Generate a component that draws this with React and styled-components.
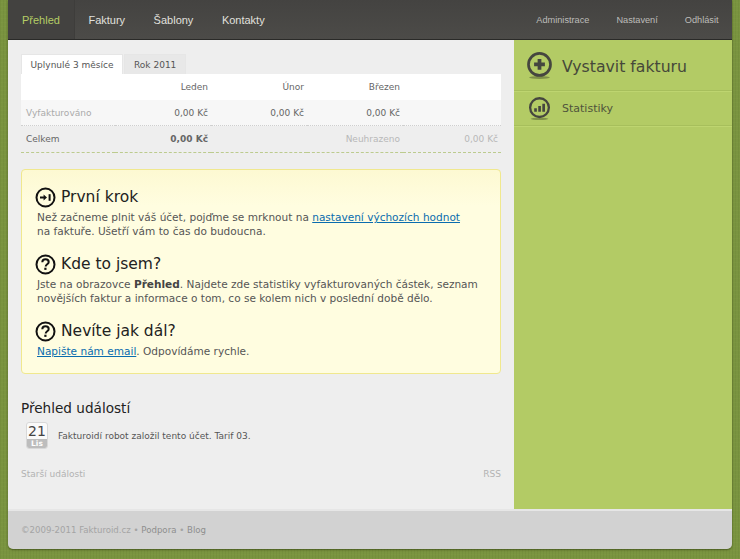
import React from "react";
import styled, { createGlobalStyle } from "styled-components";

const GlobalStyle = createGlobalStyle`
  html, body {
    margin: 0;
    padding: 0;
    height: 100%;
    background-color: #7a9440;
    background-image:
      repeating-linear-gradient(90deg, rgba(60, 80, 20, 0.08) 0 1px, transparent 1px 3px),
      repeating-linear-gradient(0deg, rgba(150, 175, 80, 0.08) 0 1px, transparent 1px 4px);
    font-family: "DejaVu Sans", Verdana, sans-serif;
    overflow: hidden;
  }
`;

const Page = styled.div`
  width: 724px;
  height: 549px;
  margin: 0 8px;
  display: flex;
  flex-direction: column;
  border-radius: 0 0 5px 5px;
  overflow: hidden;
  box-shadow: 0 1px 2px rgba(40, 50, 10, 0.6);
`;

const Nav = styled.nav`
  height: 39px;
  flex: none;
  display: flex;
  justify-content: space-between;
  background: linear-gradient(#444341, #4c4b48);
  border-bottom: 1px solid #2a2a28;
  font-family: "Liberation Sans", Arial, sans-serif;
`;

const NavGroup = styled.div`
  display: flex;
  align-items: stretch;
`;

const NavItem = styled.a`
  display: flex;
  align-items: center;
  padding: 0 14.5px 0 14px;
  font-size: 11px;
  color: ${(props) => (props.$active ? "#b5cd66" : "#e0e0de")};
  background: ${(props) => (props.$active ? "#434240" : "transparent")};
  box-shadow: ${(props) => (props.$active ? "1px 0 0 #3e3d3b" : "none")};
`;

const SubNavItem = styled.a`
  display: flex;
  align-items: center;
  padding: 0 13.5px;
  font-size: 9.2px;
  color: #bdbdba;
`;

const Body = styled.div`
  flex: 1;
  display: flex;
  min-height: 0;
`;

const Main = styled.main`
  width: 506px;
  flex: none;
  box-sizing: border-box;
  padding: 14px 13px 0;
  background: #eeeeee;
`;

const Side = styled.aside`
  flex: 1;
  background: #b3cb65;
`;

const SideRow = styled.div`
  display: flex;
  align-items: center;
  height: ${(props) => (props.$big ? "50px" : "34px")};
  padding-left: ${(props) => (props.$big ? "12px" : "14px")};
  gap: ${(props) => (props.$big ? "9px" : "11px")};
  border-bottom: 1px solid #a7bf5c;
  box-shadow: 0 1px 0 #bed570;
  font-size: ${(props) => (props.$big ? "15.7px" : "11px")};
  color: ${(props) => (props.$big ? "#46483a" : "#50543c")};
`;

const SideLabel = styled.span`
  position: relative;
  top: ${(props) => (props.$big ? "1px" : "0")};
`;

const Tabs = styled.div`
  display: flex;
  height: 20px;
`;

const Tab = styled.div`
  display: flex;
  align-items: center;
  padding: 0 ${(props) => (props.$active ? "8.5px" : "9px")};
  font-size: 9px;
  color: #555;
  background: ${(props) => (props.$active ? "#ffffff" : "#e8e8e8")};
  border: 1px solid #e6e6e6;
  border-bottom: none;
  margin-right: 1px;
`;

const Table = styled.div`
  display: grid;
  grid-template-columns: 94px 96px 96px 96px 1fr;
  font-size: 9px;
`;

const Cell = styled.div`
  height: ${(props) => (props.$h || 25) + "px"};
  display: flex;
  align-items: center;
  justify-content: ${(props) => (props.$left ? "flex-start" : "flex-end")};
  padding: 0 3px 0 ${(props) => (props.$left ? "5px" : "0")};
  box-sizing: border-box;
  white-space: nowrap;
  color: ${(props) => props.$color || "#666"};
  font-weight: ${(props) => (props.$bold ? "bold" : "normal")};
  background: ${(props) => props.$bg || "transparent"};
  border-bottom: ${(props) => props.$line || "none"};
`;

const HelpBox = styled.section`
  margin-top: 16px;
  height: 205px;
  box-sizing: border-box;
  padding: 16px 13px 0;
  background: linear-gradient(#fdf9d2, #fffde0 36px);
  border: 1px solid #f0e88e;
  border-radius: 4px;
`;

const Step = styled.div`
  margin-bottom: 15px;
`;

const StepTitle = styled.h3`
  display: flex;
  align-items: center;
  gap: 5px;
  margin: 0 0 2px;
  height: 22px;
  font-size: 15.5px;
  font-weight: normal;
  color: #222;
`;

const StepText = styled.p`
  margin: 0 0 0 2px;
  font-size: 10.55px;
  line-height: 14px;
  color: #555;
  white-space: nowrap;

  a {
    color: #0a6cae;
    text-decoration: underline;
  }

  strong {
    color: #444;
  }
`;

const EventsTitle = styled.h2`
  margin: 25px 0 5px;
  font-size: 13.6px;
  line-height: 18px;
  font-weight: normal;
  color: #222;
`;

const Event = styled.div`
  display: flex;
  align-items: center;
  gap: 10px;
  padding-left: 5px;
  font-size: 9px;
  color: #555;
`;

const DateBadge = styled.div`
  width: 22px;
  height: 27px;
  display: flex;
  flex-direction: column;
  border-radius: 3px;
  overflow: hidden;
  border: 1px solid #d8d8d8;
  box-sizing: border-box;
  background: #fafafa;
`;

const DateDay = styled.div`
  flex: 1;
  text-align: center;
  font-size: 14px;
  line-height: 16px;
  color: #444;
`;

const DateMonth = styled.div`
  height: 10px;
  background: #bdbdbd;
  color: #fff;
  text-align: center;
  font-size: 7.5px;
  line-height: 10px;
  font-weight: bold;
`;

const MoreRow = styled.div`
  display: flex;
  justify-content: space-between;
  margin-top: 20px;
  font-size: 9px;
  color: #b2b2b2;
`;

const Footer = styled.footer`
  height: 40px;
  flex: none;
  display: flex;
  align-items: center;
  box-sizing: border-box;
  padding-left: 13px;
  background: #d2d2d2;
  border-top: 2px solid #e6e6e6;
  font-size: 8.6px;
  color: #a4a4a4;

  span {
    color: #8e8e8e;
  }
`;

function CircleIcon({ size, children }) {
  return (
    <svg width={size} height={size} viewBox="0 0 26 26" style={{ flex: "none" }}>
      <ellipse cx="13" cy="24.6" rx="10" ry="1.4" fill="#7f9148" />
      <circle cx="13" cy="12" r="10.6" fill="none" stroke="#45463f" strokeWidth="2.6" />
      {children}
    </svg>
  );
}

function HelpIcon() {
  return (
    <svg width="21" height="21" viewBox="0 0 21 21" style={{ flex: "none" }}>
      <circle cx="10.5" cy="10.5" r="9" fill="none" stroke="#111" strokeWidth="2" />
      <path
        d="M7.3 8.2c0-2 1.4-3 3.2-3s3.2 1 3.2 2.7c0 2.4-3 2.3-3 4.6"
        fill="none"
        stroke="#111"
        strokeWidth="2"
      />
      <rect x="9.3" y="13.7" width="2.2" height="2.2" fill="#111" />
    </svg>
  );
}

function StartIcon() {
  return (
    <svg width="21" height="21" viewBox="0 0 21 21" style={{ flex: "none" }}>
      <circle cx="10.5" cy="10.5" r="9" fill="none" stroke="#111" strokeWidth="2" />
      <path d="M5 9.6h3.6V7.4l3.4 3.1-3.4 3.1v-2.2H5z" fill="#111" />
      <rect x="13.6" y="7.2" width="2" height="6.6" fill="#111" />
    </svg>
  );
}

export default function App() {
  return (
    <>
      <GlobalStyle />
      <Page>
        <Nav>
          <NavGroup>
            <NavItem $active>Přehled</NavItem>
            <NavItem>Faktury</NavItem>
            <NavItem>Šablony</NavItem>
            <NavItem>Kontakty</NavItem>
          </NavGroup>
          <NavGroup>
            <SubNavItem>Administrace</SubNavItem>
            <SubNavItem>Nastavení</SubNavItem>
            <SubNavItem>Odhlásit</SubNavItem>
          </NavGroup>
        </Nav>
        <Body>
          <Main>
            <Tabs>
              <Tab $active>Uplynulé 3 měsíce</Tab>
              <Tab>Rok 2011</Tab>
            </Tabs>
            <Table>
              <Cell $h={26} $bg="#fff" />
              <Cell $h={26} $bg="#fff">Leden</Cell>
              <Cell $h={26} $bg="#fff">Únor</Cell>
              <Cell $h={26} $bg="#fff">Březen</Cell>
              <Cell $h={26} $bg="#fff" />

              <Cell $left $bg="#f7f7f7" $color="#aaa" $h={26} $line="1px dotted #cfcfcf">Vyfakturováno</Cell>
              <Cell $bg="#f7f7f7" $h={26} $line="1px dotted #cfcfcf">0,00 Kč</Cell>
              <Cell $bg="#f7f7f7" $h={26} $line="1px dotted #cfcfcf">0,00 Kč</Cell>
              <Cell $bg="#f7f7f7" $h={26} $line="1px dotted #cfcfcf">0,00 Kč</Cell>
              <Cell $bg="#f7f7f7" $h={26} $line="1px dotted #cfcfcf" />

              <Cell $left $h={27} $line="1px dashed #bccb8e">Celkem</Cell>
              <Cell $bold $h={27} $line="1px dashed #bccb8e">0,00 Kč</Cell>
              <Cell $h={27} $line="1px dashed #bccb8e" />
              <Cell $color="#b8b8b8" $h={27} $line="1px dashed #bccb8e">Neuhrazeno</Cell>
              <Cell $color="#b8b8b8" $h={27} $line="1px dashed #bccb8e">0,00 Kč</Cell>
            </Table>

            <HelpBox>
              <Step>
                <StepTitle><StartIcon />První krok</StepTitle>
                <StepText>
                  Než začneme plnit váš účet, pojďme se mrknout na{" "}
                  <a href="#nastaveni">nastavení výchozích hodnot</a>
                  <br />
                  na faktuře. Ušetří vám to čas do budoucna.
                </StepText>
              </Step>
              <Step>
                <StepTitle><HelpIcon />Kde to jsem?</StepTitle>
                <StepText>
                  Jste na obrazovce <strong>Přehled</strong>. Najdete zde statistiky vyfakturovaných částek, seznam
                  <br />
                  novějších faktur a informace o tom, co se kolem nich v poslední době dělo.
                </StepText>
              </Step>
              <Step>
                <StepTitle><HelpIcon />Nevíte jak dál?</StepTitle>
                <StepText>
                  <a href="#email">Napište nám email</a>. Odpovídáme rychle.
                </StepText>
              </Step>
            </HelpBox>

            <EventsTitle>Přehled událostí</EventsTitle>
            <Event>
              <DateBadge>
                <DateDay>21</DateDay>
                <DateMonth>Lis</DateMonth>
              </DateBadge>
              Fakturoidí robot založil tento účet. Tarif 03.
            </Event>
            <MoreRow>
              <span>Starší události</span>
              <span>RSS</span>
            </MoreRow>
          </Main>
          <Side>
            <SideRow $big>
              <CircleIcon size={27}>
                <path d="M11.2 6.8h3.6v3.4h3.4v3.6h-3.4v3.4h-3.6v-3.4H7.8v-3.6h3.4z" fill="#45463f" />
              </CircleIcon>
              <SideLabel $big>Vystavit fakturu</SideLabel>
            </SideRow>
            <SideRow>
              <CircleIcon size={23}>
                <path d="M7 12.6h3v4.2H7zM11.6 10.2h3v6.6h-3zM16.2 7.6h3v9.2h-3z" fill="#45463f" />
              </CircleIcon>
              <SideLabel>Statistiky</SideLabel>
            </SideRow>
          </Side>
        </Body>
        <Footer>
          ©2009-2011 Fakturoid.cz&nbsp;•&nbsp;<span>Podpora</span>&nbsp;•&nbsp;<span>Blog</span>
        </Footer>
      </Page>
    </>
  );
}
